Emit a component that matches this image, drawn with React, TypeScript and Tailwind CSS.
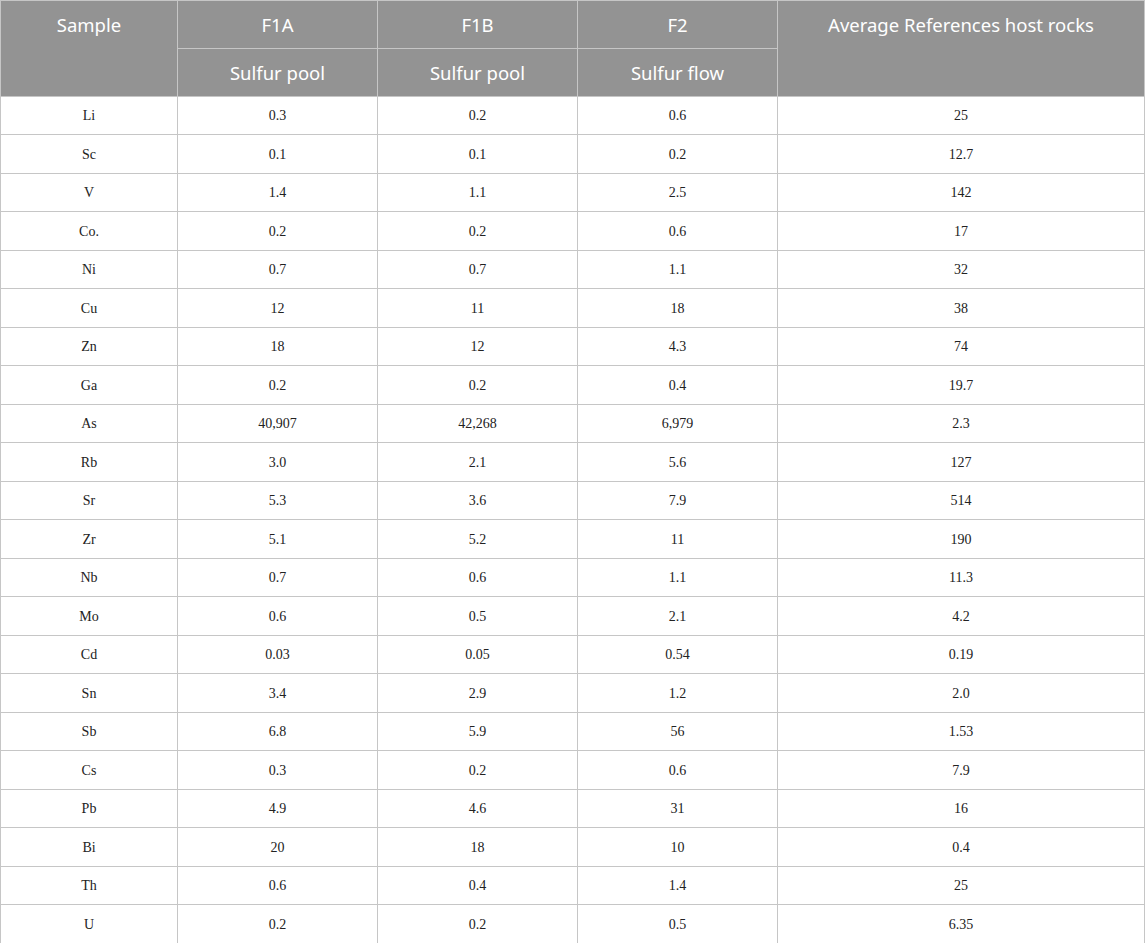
const rows: [string, string, string, string, string][] = [
  ['Li', '0.3', '0.2', '0.6', '25'],
  ['Sc', '0.1', '0.1', '0.2', '12.7'],
  ['V', '1.4', '1.1', '2.5', '142'],
  ['Co.', '0.2', '0.2', '0.6', '17'],
  ['Ni', '0.7', '0.7', '1.1', '32'],
  ['Cu', '12', '11', '18', '38'],
  ['Zn', '18', '12', '4.3', '74'],
  ['Ga', '0.2', '0.2', '0.4', '19.7'],
  ['As', '40,907', '42,268', '6,979', '2.3'],
  ['Rb', '3.0', '2.1', '5.6', '127'],
  ['Sr', '5.3', '3.6', '7.9', '514'],
  ['Zr', '5.1', '5.2', '11', '190'],
  ['Nb', '0.7', '0.6', '1.1', '11.3'],
  ['Mo', '0.6', '0.5', '2.1', '4.2'],
  ['Cd', '0.03', '0.05', '0.54', '0.19'],
  ['Sn', '3.4', '2.9', '1.2', '2.0'],
  ['Sb', '6.8', '5.9', '56', '1.53'],
  ['Cs', '0.3', '0.2', '0.6', '7.9'],
  ['Pb', '4.9', '4.6', '31', '16'],
  ['Bi', '20', '18', '10', '0.4'],
  ['Th', '0.6', '0.4', '1.4', '25'],
  ['U', '0.2', '0.2', '0.5', '6.35'],
];

const th = "border border-[#c6c6c6] font-normal text-white text-[18.5px] leading-[24px] align-middle text-center";
const td = "border border-[#c6c6c6] text-center align-middle text-[14px] text-[#222]";

export default function App() {
  return (
    <div className="w-[1145px] h-[943px] bg-white overflow-hidden">
      <table className="w-[1145px] table-fixed border-collapse">
        <colgroup>
          <col className="w-[177px]" />
          <col className="w-[200px]" />
          <col className="w-[200px]" />
          <col className="w-[200px]" />
          <col />
        </colgroup>
        <thead className="bg-[#939393] font-['Noto_Sans','Open_Sans',sans-serif]">
          <tr className="h-[48px]">
            <th rowSpan={2} className={th + " align-top pt-[12px]"}>Sample</th>
            <th className={th}>F1A</th>
            <th className={th}>F1B</th>
            <th className={th}>F2</th>
            <th rowSpan={2} className={th + " align-top pt-[12px]"}>Average References host rocks</th>
          </tr>
          <tr className="h-[48px]">
            <th className={th}>Sulfur pool</th>
            <th className={th}>Sulfur pool</th>
            <th className={th}>Sulfur flow</th>
          </tr>
        </thead>
        <tbody className="font-['Liberation_Serif',serif]">
          {rows.map((r, i) => (
            <tr key={i} className={i % 2 === 0 ? "h-[38px]" : "h-[39px]"}>
              {r.map((c, j) => (
                <td key={j} className={td}>{c}</td>
              ))}
            </tr>
          ))}
        </tbody>
      </table>
    </div>
  );
}
